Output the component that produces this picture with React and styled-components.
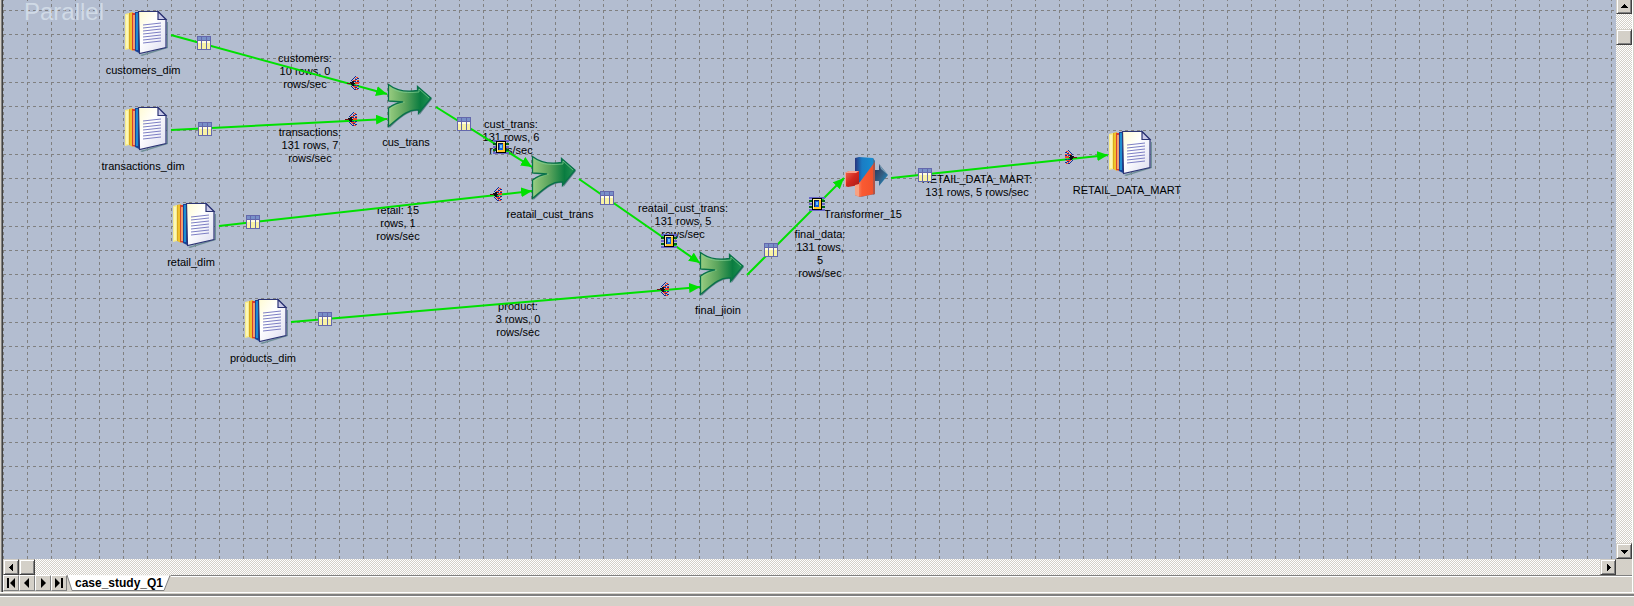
import React from 'react';
import styled, { createGlobalStyle } from 'styled-components';

const GlobalStyle = createGlobalStyle`
  * { box-sizing: border-box; }
  body {
    margin: 0;
    background: #d4d0c8;
    font-family: "Liberation Sans", Arial, sans-serif;
    font-size: 11px;
    line-height: 13px;
    color: #000;
  }
`;

const Window = styled.main`
  display: flex;
  flex-direction: column;
  height: 100vh;
  overflow: hidden;
`;

const Frame = styled.section`
  flex: 1;
  min-height: 0;
  display: flex;
  flex-direction: column;
  border-left: 1px solid #404040;
  border-right: 1px solid #fff;
  margin: 0 1px 0 2px;
  box-shadow: -1px 0 0 #808080;
`;

const Workspace = styled.div`
  flex: 1;
  min-height: 0;
  display: grid;
  grid-template-columns: minmax(0, 1fr) 16px;
  grid-template-rows: minmax(0, 1fr) 16px;
`;

const Canvas = styled.div`
  position: relative;
  overflow: hidden;
  background: #b3bdd0;
`;

const Layer = styled.svg`
  position: absolute;
  inset: 0;
  width: 100%;
  height: 100%;
`;

const Watermark = styled.h1`
  position: absolute;
  left: 21px;
  top: 0;
  margin: 0;
  font-size: 24px;
  line-height: 24px;
  font-weight: 400;
  color: #d0dae6;
`;

const Caption = styled.p`
  position: absolute;
  left: ${(p) => p.$x}px;
  top: ${(p) => p.$y}px;
  transform: translateX(-50%);
  margin: 0;
  text-align: center;
  white-space: pre;
`;

const Node = styled.figure`
  position: absolute;
  left: ${(p) => p.$x}px;
  top: ${(p) => p.$y}px;
  width: 36px;
  margin: 0;
  display: flex;
  flex-direction: column;
  align-items: center;
  gap: 8px;

  svg {
    flex: none;
    align-self: flex-start;
    overflow: visible;
  }
`;

const NodeLabel = styled.figcaption`
  white-space: nowrap;
`;

const Marker = styled.span`
  position: absolute;
  left: ${(p) => p.$x}px;
  top: ${(p) => p.$y}px;
  transform: ${(p) => (p.$flip ? 'scaleX(-1)' : 'none')};

  svg { display: block; }
`;

const ScrollBar = styled.div`
  display: flex;
  flex-direction: ${(p) => (p.$vertical ? 'column' : 'row')};
  background: repeating-conic-gradient(#d4d0c8 0 25%, #fff 0 50%) 0 0 / 2px 2px;
`;

const Bevel = styled.button`
  flex: none;
  width: 16px;
  height: ${(p) => (p.$clipped ? 14 : 16)}px;
  padding: 0;
  display: flex;
  align-items: center;
  justify-content: center;
  background: #d4d0c8;
  border: 1px solid;
  border-color: #d4d0c8 #404040 #404040 #d4d0c8;
  border-top-width: ${(p) => (p.$clipped ? 0 : 1)}px;
  box-shadow: inset 1px ${(p) => (p.$clipped ? 0 : 1)}px 0 #fff, inset -1px -1px 0 #808080;
`;

const Gap = styled.div`
  flex: ${(p) => p.$size || '1'};
`;

const TabBar = styled.nav`
  display: flex;
  align-items: flex-start;
  height: 17px;
`;

const TabButton = styled(Bevel)`
  border-color: #fff #808080 #808080 #fff;
  box-shadow: none;
`;

const Tab = styled.button`
  position: relative;
  width: 104px;
  height: 16px;
  padding: 0;
  border: 0;
  background: none;
  font: bold 12px/16px "Liberation Sans", Arial, sans-serif;
  color: #000;

  svg {
    position: absolute;
    left: 0;
    top: 0;
  }

  span { position: relative; }
`;

const TabRule = styled.div`
  flex: 1;
  border-top: 1px solid #808080;
  box-shadow: inset 0 1px 0 #fff;
  height: 16px;
`;

const StatusBar = styled.footer`
  height: 14px;
  border-top: 1px solid #fff;

  &::before {
    content: "";
    display: block;
    margin-top: 1px;
    height: 2px;
    background: #808080;
    border-bottom: 1px solid #fff;
  }
`;

function Arrow({ dir }) {
  const d = {
    left: 'M5 0v7h-1v-1h-1v-1h-1v-1h-1v-1h1v-1h1v-1h1v-1z',
    right: 'M2 0v7h1v-1h1v-1h1v-1h1v-1h-1v-1h-1v-1h-1v-1z',
    up: 'M0 5h7v-1h-1v-1h-1v-1h-1v-1h-1v1h-1v1h-1v1h-1z',
    down: 'M0 2h7v1h-1v1h-1v1h-1v1h-1v-1h-1v-1h-1v-1h-1z',
  }[dir];
  return (
    <svg width="7" height="7" viewBox="0 0 7 7" shapeRendering="crispEdges" aria-hidden="true">
      <path d={d} />
    </svg>
  );
}

function NavArrow({ back, end }) {
  return (
    <svg width="10" height="10" viewBox="0 0 10 10" aria-hidden="true">
      <g transform={back ? 'translate(10 0) scale(-1 1)' : undefined}>
        <path d={end ? 'M1 0v10l5-5z M7 0h2v10h-2z' : 'M3 0v10l5-5z'} />
      </g>
    </svg>
  );
}

function FilesIcon() {
  return (
    <svg width="44" height="45" viewBox="0 0 44 45" aria-hidden="true">
      <defs>
        <linearGradient id="paper" x1="0" y1="0" x2="1" y2="1">
          <stop offset="0" stopColor="#fffbd2" />
          <stop offset=".4" stopColor="#fff" />
          <stop offset="1" stopColor="#dcdcf0" />
        </linearGradient>
      </defs>
      <path d="M15 44L42 36V11h1v26L17 45z" fill="#6f8f98" />
      <path d="M0 3l4-1v36l-4 1z" fill="#f7ec8c" />
      <path d="M1 4h2v33h-2z" fill="#fbf6b8" />
      <path d="M4 2l4-1v39l-4-2z" fill="#f0c32d" />
      <path d="M4 2h1v36h-1z" fill="#d9a91d" />
      <path d="M7 2h4v38l-4-1z" fill="#d8402e" />
      <path d="M8 4h2v34h-2z" fill="#f0a070" />
      <path d="M10 1h4v41l-4-2z" fill="#17449a" />
      <path d="M11 2h2v37h-2z" fill="#1f8ed0" />
      <path d="M13.500 .5H33l8 8v28L14.500 42.500z" fill="url(#paper)" stroke="#2c3474" strokeWidth="1.200" />
      <path d="M33 .5v8h8z" fill="#c9c9e8" stroke="#2c3474" strokeWidth="1.200" />
      {[12, 15, 18, 21, 24, 27, 30].map((y) => (
        <path key={y} d={`M18 ${y + 2}L36 ${y}`} stroke="#7d7fc4" />
      ))}
    </svg>
  );
}

function JoinIcon() {
  return (
    <svg width="44" height="44" viewBox="0 0 44 44" aria-hidden="true">
      <defs>
        <linearGradient id="join" x1="0" y1="0" x2="1" y2="0">
          <stop offset="0" stopColor="#98cc80" />
          <stop offset=".4" stopColor="#5aa45c" />
          <stop offset=".75" stopColor="#0a7c40" />
          <stop offset="1" stopColor="#229454" />
        </linearGradient>
      </defs>
      <path
        d="M1.500 1.500C11 9 20 9 30.500 7.500V3.500L44 15L31.500 31V27C21 26 13 33 1.500 44V25C7 20 10 19 15 18.500L1.500 18z"
        fill="#5e7f86"
      />
      <path
        d="M.5 .5C10 8 20 8 29.500 6.500V2.500L43 14L30.500 29.500V26C20 25 13 32 .5 42.500V24C6 20 10 18.500 15 18L.5 17z"
        fill="url(#join)"
        stroke="#08714a"
        strokeWidth="1.300"
      />
      <path d="M3 4C11 9 20 9 31 8V5L41 14" fill="none" stroke="#7fcf92" strokeOpacity=".7" />
      <path d="M2 39V25C7 21 11 20 17 18" fill="none" stroke="#9be0a4" strokeOpacity=".3" />
    </svg>
  );
}

function TransformerIcon() {
  return (
    <svg width="44" height="43" viewBox="0 0 44 43" aria-hidden="true">
      <defs>
        <linearGradient id="tBlue" x1="0" y1="0" x2="1" y2="0">
          <stop offset="0" stopColor="#26347e" />
          <stop offset=".35" stopColor="#1a7cc4" />
          <stop offset="1" stopColor="#1590d2" />
        </linearGradient>
        <linearGradient id="tRed" x1="0" y1="0" x2="1" y2="1">
          <stop offset="0" stopColor="#f06a52" />
          <stop offset=".5" stopColor="#d2281e" />
          <stop offset="1" stopColor="#a81a1a" />
        </linearGradient>
        <linearGradient id="tArrow" x1="0" y1="0" x2="1" y2="1">
          <stop offset="0" stopColor="#26345a" />
          <stop offset=".5" stopColor="#345c80" />
          <stop offset="1" stopColor="#1898d4" />
        </linearGradient>
        <linearGradient id="tOrange" x1="0" y1="0" x2="1" y2="0">
          <stop offset="0" stopColor="#f2a488" />
          <stop offset=".35" stopColor="#fa5a32" />
          <stop offset="1" stopColor="#f0502a" />
        </linearGradient>
      </defs>
      <path d="M30 13h4V7l9 11-9 11v-5h-4z" fill="url(#tArrow)" />
      <path d="M34 7l9 11-7-6z" fill="#7ba0b8" />
      <path d="M10 1l4-1 14 1 2 3v33l-15 3-5-2z" fill="url(#tBlue)" />
      <path d="M29 6L15 25 10 29v9l5 2 15-3V5z" fill="url(#tOrange)" />
      <path d="M0 16l4-2h10v14L3 30l-3-1z" fill="url(#tRed)" />
      <path d="M0 16l4-2h10l-3 2H1v13H0z" fill="#f9a08c" />
      <path d="M10 28l4-1v13l-4-2z" fill="#f7a283" />
      <path d="M28 1l2 3v33l-2 1z" fill="#6b5766" fillOpacity=".5" />
    </svg>
  );
}

const nodeIcons = { files: FilesIcon, join: JoinIcon, transformer: TransformerIcon };

function TableMark() {
  return (
    <svg width="14" height="14" viewBox="0 0 14 14" shapeRendering="crispEdges" aria-hidden="true">
      <path d="M0 0h14v14h-14z" fill="#6468ac" />
      <path d="M1 1h12v4h-12z" fill="#7890c8" />
      <path d="M1 5h3v8h-3zM5 5h4v8h-4zM10 5h3v8h-3z" fill="#f8f2a4" />
      <path d="M1 5h3v2h-3zM5 5h4v2h-4zM10 5h3v2h-3z" fill="#fffce0" />
      <path d="M4 1h1v4h-1zM9 1h1v4h-1zM1 4h12v1h-12z" fill="#6468ac" />
    </svg>
  );
}

function ChipMark() {
  return (
    <svg width="16" height="14" viewBox="0 0 16 14" shapeRendering="crispEdges" aria-hidden="true">
      <path d="M0 0h16v2h-16zM0 6h16v2h-16zM0 12h16v2h-16z" fill="#6666c8" />
      <path d="M0 3h16v2h-16zM0 9h16v2h-16z" fill="#006414" />
      <path d="M3 1h10v12h-10z" />
      <path d="M4 2h8v10h-8z" fill="#fff0a0" />
      <path d="M10 3h2v9h-7v-2h5z" fill="#ffc828" />
      <path d="M5 3h5v7h-5z" fill="#101c50" />
      <path d="M6 4h4v6h-4z" fill="#1460d8" />
      <path d="M7 5h2v3h-2z" fill="#68c4ff" />
    </svg>
  );
}

function FanMark() {
  return (
    <svg width="12" height="14" viewBox="0 0 12 14" shapeRendering="crispEdges" aria-hidden="true">
      <path
        d="M8 0h1v1h-1zM7 1h1v1h-1zM6 2h1v1h-1zM5 3h1v1h-1zM4 4h1v1h-1zM10 2h2v1h-2zM8 3h2v1h-2zM7 5h2v1h-2zM10 5h2v1h-2zM10 9h2v1h-2zM7 9h2v1h-2zM8 11h2v1h-2zM10 12h2v1h-2zM4 10h1v1h-1zM5 11h1v1h-1zM6 12h1v1h-1zM7 13h2v1h-2z"
        fill="#142c98"
      />
      <path
        d="M9 1h2v1h-2zM8 2h1v1h-1zM6 4h2v1h-2zM10 4h2v1h-2zM8 4h1v1h-1zM8 6h4v2h-4zM6 10h2v1h-2zM8 10h3v1h-3zM7 11h1v1h-1zM8 12h1v1h-1zM9 13h2v1h-2z"
        fill="#f04428"
      />
      <path d="M3 6h2v-1h2v2h1v1h-1v2h-2v-1h-1v-1h-1z" fill="#101018" />
      <path d="M0 7h4v1h-4z" fill="#701414" />
    </svg>
  );
}

const markers = { table: TableMark, chip: ChipMark, fan: FanMark };

const stages = [
  { name: 'customers_dim', kind: 'files', x: 122, y: 11 },
  { name: 'transactions_dim', kind: 'files', x: 122, y: 107 },
  { name: 'retail_dim', kind: 'files', x: 170, y: 203 },
  { name: 'products_dim', kind: 'files', x: 242, y: 299 },
  { name: 'cus_trans', kind: 'join', x: 385, y: 84 },
  { name: 'reatail_cust_trans', kind: 'join', x: 529, y: 156 },
  { name: 'final_jioin', kind: 'join', x: 697, y: 252 },
  { name: 'Transformer_15', kind: 'transformer', x: 842, y: 157 },
  { name: 'RETAIL_DATA_MART', kind: 'files', x: 1106, y: 131 },
];

const links = [
  { from: [168, 35], to: [384, 94], text: 'customers:\n10 rows, 0\nrows/sec', at: [302, 52], marks: [['table', 194, 36], ['fan', 344, 76]] },
  { from: [168, 130], to: [384, 119], text: 'transactions:\n131 rows, 7\nrows/sec', at: [307, 126], marks: [['table', 195, 122], ['fan', 342, 112]] },
  { from: [216, 226], to: [529, 191], text: 'retail: 15\nrows, 1\nrows/sec', at: [395, 204], marks: [['table', 243, 215], ['fan', 487, 187]] },
  { from: [288, 322], to: [697, 287], text: 'product:\n3 rows, 0\nrows/sec', at: [515, 300], marks: [['table', 315, 312], ['fan', 654, 282]] },
  { from: [433, 107], to: [529, 167], text: 'cust_trans:\n131 rows, 6\nrows/sec', at: [508, 118], marks: [['table', 454, 117], ['chip', 490, 140]] },
  { from: [576, 179], to: [697, 263], text: 'reatail_cust_trans:\n131 rows, 5\nrows/sec', at: [680, 202], marks: [['table', 597, 191], ['chip', 658, 234]] },
  { from: [744, 275], to: [841, 178], text: 'final_data:\n131 rows,\n5\nrows/sec', at: [817, 228], marks: [['table', 761, 243], ['chip', 806, 197]] },
  { from: [888, 178], to: [1105, 155], text: 'RETAIL_DATA_MART:\n131 rows, 5 rows/sec', at: [974, 173], marks: [['table', 915, 168], ['fan', 1062, 150, true]] },
];

function Diagram() {
  return (
    <Canvas>
      <Layer shapeRendering="crispEdges" aria-hidden="true">
        <defs>
          <pattern id="grid" y="10" width="24" height="24" patternUnits="userSpaceOnUse">
            <path d="M0 .5H24M.5 0V24" stroke="#808080" strokeDasharray="3 3" />
          </pattern>
        </defs>
        <rect width="100%" height="100%" fill="url(#grid)" />
      </Layer>
      <Watermark>Parallel</Watermark>
      {links.map((l) => (
        <Caption key={l.text} $x={l.at[0]} $y={l.at[1]}>{l.text}</Caption>
      ))}
      <Layer aria-hidden="true">
        <defs>
          <marker id="head" markerUnits="userSpaceOnUse" markerWidth="11" markerHeight="10" refX="11" refY="5" orient="auto">
            <path d="M0 0L11 5L0 10z" fill="#00e000" />
          </marker>
        </defs>
        {links.map((l) => (
          <path key={l.text} d={`M${l.from}L${l.to}`} stroke="#00e000" strokeWidth="2" markerEnd="url(#head)" />
        ))}
      </Layer>
      {stages.map((s) => {
        const Icon = nodeIcons[s.kind];
        return (
          <Node key={s.name} $x={s.x} $y={s.y}>
            <Icon />
            <NodeLabel>{s.name}</NodeLabel>
          </Node>
        );
      })}
      {links.flatMap((l) => l.marks).map(([kind, x, y, flip]) => {
        const Mark = markers[kind];
        return <Marker key={`${x}-${y}`} $x={x} $y={y} $flip={flip}><Mark /></Marker>;
      })}
    </Canvas>
  );
}

export default function App() {
  return (
    <Window>
      <GlobalStyle />
      <Frame>
        <Workspace>
          <Diagram />
          <ScrollBar $vertical>
            <Bevel $clipped aria-label="Scroll up"><Arrow dir="up" /></Bevel>
            <Gap $size="0 0 15px" />
            <Bevel aria-label="Vertical position" />
            <Gap />
            <Bevel aria-label="Scroll down"><Arrow dir="down" /></Bevel>
          </ScrollBar>
          <ScrollBar>
            <Bevel aria-label="Scroll left"><Arrow dir="left" /></Bevel>
            <Bevel aria-label="Horizontal position" />
            <Gap />
            <Bevel aria-label="Scroll right"><Arrow dir="right" /></Bevel>
          </ScrollBar>
        </Workspace>
        <TabBar>
          <TabButton aria-label="First tab"><NavArrow back end /></TabButton>
          <TabButton aria-label="Previous tab"><NavArrow back /></TabButton>
          <TabButton aria-label="Next tab"><NavArrow /></TabButton>
          <TabButton aria-label="Last tab"><NavArrow end /></TabButton>
          <Tab>
            <svg width="104" height="16" viewBox="0 0 104 16" aria-hidden="true">
              <path d="M0 0L5 15.500H97L103 .5" fill="#fff" stroke="#808080" />
              <path d="M1 0H102" stroke="#fff" />
            </svg>
            <span>case_study_Q1</span>
          </Tab>
          <TabRule />
        </TabBar>
      </Frame>
      <StatusBar />
    </Window>
  );
}
